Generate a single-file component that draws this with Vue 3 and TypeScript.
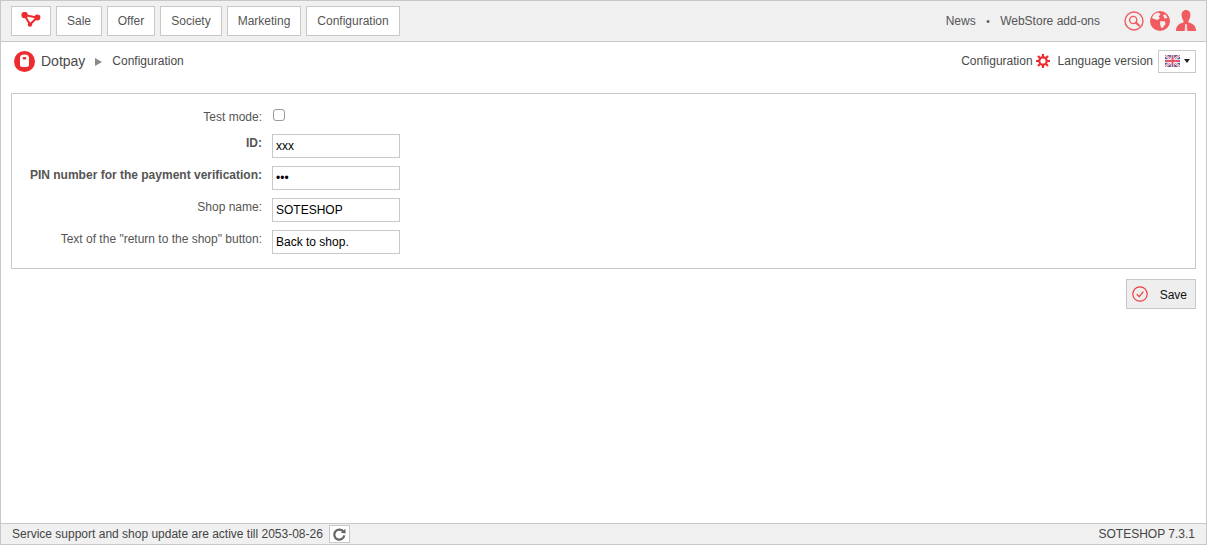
<script setup lang="ts">
const menu = [
  { name: 'Sale', width: 46 },
  { name: 'Offer', width: 48 },
  { name: 'Society', width: 62 },
  { name: 'Marketing', width: 74 },
  { name: 'Configuration', width: 94 },
]
const fields = [
  { label: 'ID:', value: 'xxx', bold: true, type: 'text' },
  { label: 'PIN number for the payment verification:', value: 'xxx', bold: true, type: 'password' },
  { label: 'Shop name:', value: 'SOTESHOP', bold: false, type: 'text' },
  { label: 'Text of the "return to the shop" button:', value: 'Back to shop.', bold: false, type: 'text' },
]
</script>

<template>
  <div class="page">
    <header class="topbar">
      <nav class="menu">
        <button class="menu-btn logo">
          <svg width="20" height="15" viewBox="0 0 20 15">
            <path d="M3.5 3 L16 5.5 L9 12.5 Z" fill="none" stroke="#ee2b2f" stroke-width="2" />
            <circle cx="3.6" cy="3" r="3.2" fill="#ee2b2f" />
            <circle cx="16.4" cy="5.6" r="3" fill="#ee2b2f" />
            <circle cx="9" cy="12.6" r="2.2" fill="#ee2b2f" />
          </svg>
        </button>
        <button v-for="m in menu" :key="m.name" class="menu-btn" :style="{ width: m.width + 'px' }">{{ m.name }}</button>
      </nav>
      <div class="top-right">
        <span>News</span>
        <span class="dot">•</span>
        <span>WebStore add-ons</span>
        <div class="top-icons">
          <svg width="20" height="20" viewBox="0 0 20 20">
            <circle cx="10" cy="10" r="9" fill="none" stroke="#f15b60" stroke-width="1.4" />
            <circle cx="9.2" cy="9" r="3.6" fill="none" stroke="#f15b60" stroke-width="1.4" />
            <path d="M11.8 11.6 L15 14.6" stroke="#f15b60" stroke-width="2" stroke-linecap="round" />
          </svg>
          <svg width="20" height="20" viewBox="0 0 20 20">
            <circle cx="10" cy="10" r="10" fill="#f15b60" />
            <path d="M6 2 C8 1.5 10 2 10.5 3.5 L8.5 5.5 L10 7 L7.5 9 L4 8 L2 7 C2.5 5 4 3 6 2 Z M10.5 10 L15 10.5 L15.5 13 L12.5 17 L11 16.5 L10 13 Z" fill="#f4f0f0" />
            <path d="M13 4 L15.5 3.5 L17.5 7 L14.5 7.5 Z" fill="#f4f0f0" />
          </svg>
          <svg width="20" height="22" viewBox="0 0 20 22">
            <path d="M10 0 C13 0 14.6 2.4 14.4 5.2 C14.2 8 13.2 10 12.4 11 L12.6 12.4 C17 13.4 20 15.6 20 21 H0 C0 15.6 3 13.4 7.4 12.4 L7.6 11 C6.8 10 5.8 8 5.6 5.2 C5.4 2.4 7 0 10 0 Z" fill="#f15b60" />
            <path d="M9.2 14 H10.8 L11.4 21 H8.6 Z" fill="#f9d9da" />
          </svg>
        </div>
      </div>
    </header>

    <div class="crumbs">
      <div class="crumb-left">
        <svg class="app-icon" width="21" height="21" viewBox="0 0 21 21">
          <circle cx="10.5" cy="10.5" r="10.5" fill="#ee2b2f" />
          <path d="M6 7 C6 4.6 7.6 3.5 10.5 3.5 C13.4 3.5 15 4.6 15 7 V13.5 A2.5 2.5 0 0 1 12.5 16 H8.5 A2.5 2.5 0 0 1 6 13.5 Z" fill="#fff" />
          <rect x="8.7" y="6" width="3.6" height="2.6" rx="1" fill="#ee2b2f" />
        </svg>
        <span class="app-name">Dotpay</span>
        <span class="arrow"></span>
        <span class="crumb">Configuration</span>
      </div>
      <div class="crumb-right">
        <span>Configuration</span>
        <svg class="gear" width="14" height="14" viewBox="0 0 14 14">
          <circle cx="7" cy="7" r="3.7" fill="none" stroke="#ee2b2f" stroke-width="2.2" />
          <path d="M7 0 V3 M7 11 V14 M0 7 H3 M11 7 H14 M2 2 L4 4 M10 10 L12 12 M12 2 L10 4 M4 10 L2 12" stroke="#ee2b2f" stroke-width="2.2" />
        </svg>
        <span class="lang">Language version</span>
        <button class="flag-btn">
          <svg class="flag" width="15" height="12" viewBox="0 0 15 12">
            <rect width="15" height="12" fill="#5560a0" />
            <path d="M0 0 L15 12 M15 0 L0 12" stroke="#fff" stroke-width="2.2" />
            <path d="M0 0 L15 12 M15 0 L0 12" stroke="#e0566a" stroke-width=".9" />
            <path d="M7.5 0 V12 M0 6 H15" stroke="#fff" stroke-width="3.4" />
            <path d="M7.5 0 V12 M0 6 H15" stroke="#e0566a" stroke-width="2" />
          </svg>
          <span class="caret"></span>
        </button>
      </div>
    </div>

    <main class="content">
      <form class="panel" @submit.prevent>
        <div class="row check-row">
          <label class="label">Test mode:</label>
          <input class="check" type="checkbox" />
        </div>
        <div v-for="f in fields" :key="f.label" class="row">
          <label class="label" :class="{ bold: f.bold }">{{ f.label }}</label>
          <input class="text" :type="f.type" :value="f.value" />
        </div>
      </form>
      <div class="actions">
        <button class="save">
          <svg width="16" height="16" viewBox="0 0 16 16">
            <circle cx="8" cy="8" r="7.2" fill="none" stroke="#ee3b40" stroke-width="1.2" />
            <path d="M4.8 8.2 L7.2 10.6 L11.4 5.6" fill="none" stroke="#ee3b40" stroke-width="1.3" />
          </svg>
          <span class="save-label">Save</span>
        </button>
      </div>
    </main>

    <footer class="footer">
      <div class="foot-left">
        <span>Service support and shop update are active till 2053-08-26</span>
        <button class="refresh">
          <svg width="13" height="13" viewBox="0 0 13 13">
            <path d="M10.6 4 A5 5 0 1 0 11.3 7.4" fill="none" stroke="#666" stroke-width="2.2" />
            <path d="M7.8 4.8 L12.6 5.6 L12.4 .8 Z" fill="#666" />
          </svg>
        </button>
      </div>
      <span>SOTESHOP 7.3.1</span>
    </footer>
  </div>
</template>

<style>
html, body { margin: 0; padding: 0; }
</style>

<style scoped>
.page {
  box-sizing: border-box;
  width: 1207px;
  height: 545px;
  display: flex;
  flex-direction: column;
  border: 1px solid #c8c8c8;
  font-family: "Liberation Sans", Arial, sans-serif;
  font-size: 12px;
  color: #555;
  background: #fff;
}
.topbar {
  box-sizing: border-box;
  height: 41px;
  flex: none;
  display: flex;
  align-items: center;
  justify-content: space-between;
  padding: 0 10px 0 10px;
  background: #f0f0f0;
  border-bottom: 1px solid #c8c8c8;
}
.menu { display: flex; gap: 5px; margin-top: -1px; }
.menu-btn {
  box-sizing: border-box;
  height: 30px;
  padding: 0;
  background: #fff;
  border: 1px solid #c8c8c8;
  font: inherit;
  color: #555;
  display: flex;
  align-items: center;
  justify-content: center;
}
.logo { width: 40px; padding: 0 0 3px; }
.top-right { display: flex; align-items: center; }
.dot { margin: 0 10.5px; font-size: 10px; }
.top-icons { display: flex; align-items: center; gap: 6px; margin-left: 24px; }
.crumbs {
  flex: none;
  height: 38px;
  display: flex;
  align-items: center;
  justify-content: space-between;
  padding: 0 10px 0 13px;
}
.crumb-left, .crumb-right { display: flex; align-items: center; }
.app-name { font-size: 14px; margin-left: 6px; color: #4a4a4a; }
.arrow {
  width: 0;
  height: 0;
  margin: 1px 10px 0 10px;
  border-left: 7px solid #8a8a8a;
  border-top: 4px solid transparent;
  border-bottom: 4px solid transparent;
}
.crumb { color: #4a4a4a; }
.crumb-right { color: #4a4a4a; }
.gear { margin-left: 3px; }
.lang { margin-left: 8px; }
.flag-btn {
  box-sizing: border-box;
  width: 38px;
  height: 23px;
  margin-left: 5px;
  padding: 0 0 0 6px;
  background: #fff;
  border: 1px solid #c8c8c8;
  display: flex;
  align-items: center;
  gap: 3px;
}
.flag { flex: none; }
.caret {
  width: 0;
  height: 0;
  margin-left: 1px;
  border-top: 4px solid #222;
  border-left: 3.5px solid transparent;
  border-right: 3.5px solid transparent;
}
.content { flex: 1; padding: 13px 10px 0; min-height: 0; }
.panel {
  box-sizing: border-box;
  height: 176px;
  padding: 10px 0 0;
  border: 1px solid #c8c8c8;
}
.row {
  display: flex;
  align-items: flex-start;
  height: 32px;
}
.check-row { height: 30px; }
.label {
  box-sizing: border-box;
  width: 250px;
  text-align: right;
  padding-top: 2px;
  color: #555;
}
.check-row .label { padding-top: 6px; }
.bold { font-weight: 700; }
.check {
  appearance: none;
  box-sizing: border-box;
  width: 12px;
  height: 12px;
  margin: 5px 0 0 11px;
  background: #fff;
  border: 1px solid #9a9a9a;
  border-radius: 3px;
}
.text {
  box-sizing: border-box;
  width: 128px;
  height: 24px;
  margin: 0 0 0 10px;
  padding: 0 3px 1px;
  border: 1px solid #c8c8c8;
  background: #fff;
  font: inherit;
  color: #000;
  outline: none;
}
.actions { display: flex; justify-content: flex-end; margin-top: 10px; }
.save {
  box-sizing: border-box;
  width: 70px;
  height: 30px;
  display: flex;
  align-items: center;
  justify-content: space-between;
  padding: 0 8px 0 5px;
  background: #eeeeee;
  border: 1px solid #c8c8c8;
  font: inherit;
  color: #111;
}
.save-label { padding-top: 2px; }
.footer {
  box-sizing: border-box;
  flex: none;
  height: 21px;
  display: flex;
  align-items: center;
  justify-content: space-between;
  padding: 0 11px;
  background: #f0f0f0;
  border-top: 1px solid #c8c8c8;
  color: #444;
}
.foot-left { display: flex; align-items: center; }
.refresh {
  box-sizing: border-box;
  width: 21px;
  height: 18px;
  margin-left: 6px;
  padding: 0;
  background: #fff;
  border: 1px solid #c8c8c8;
  display: flex;
  align-items: center;
  justify-content: center;
}
</style>
